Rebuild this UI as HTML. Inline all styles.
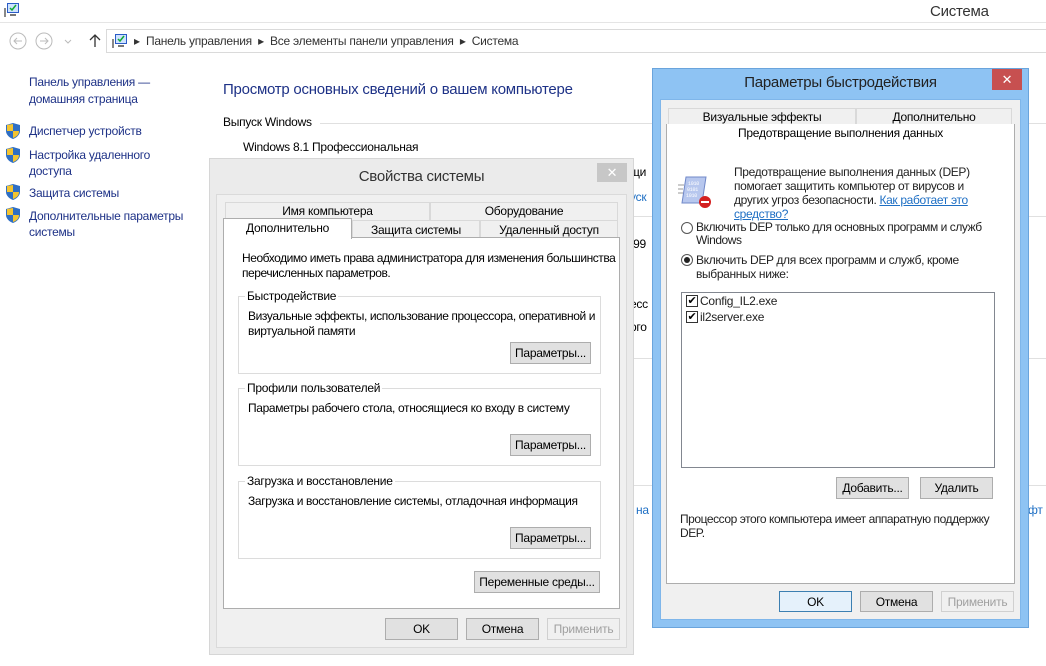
<!DOCTYPE html>
<html><head><meta charset="utf-8"><style>
*{margin:0;padding:0;box-sizing:border-box}
body{width:1046px;height:666px;overflow:hidden;background:#fff;font-family:"Liberation Sans",sans-serif;font-size:12px;color:#000;position:relative;letter-spacing:-0.25px}
.a{position:absolute;white-space:nowrap}
.btn{position:absolute;background:#e1e1e1;border:1px solid #adadad;text-align:center;font-size:12px;line-height:20px;color:#000}
.dis{color:#a0a0a0;background:#f0f0f0;border-color:#d0d0d0}
.grp{position:absolute;border:1px solid #dcdcdc}
.gl{position:absolute;background:#fff;padding:0 2px;top:-8px;left:6px;font-size:12px}
.tab{position:absolute;background:#f0f0f0;border:1px solid #d9d9d9;text-align:center;font-size:12px;line-height:16px}
</style></head><body>
<div class="a" style="left:0;top:0;width:1046px;height:23px;background:#fff;border-bottom:1px solid #e5e5e5"></div>
<svg class="a" style="left:4px;top:2px" width="16" height="16"><rect x="3" y="1" width="12" height="10" fill="#2a5cc7"/><rect x="4" y="2" width="10" height="8" fill="#cfe3ff"/><path d="M6 6l2 2 4-5" stroke="#1a3" stroke-width="1.5" fill="none"/><rect x="6" y="12" width="6" height="2" fill="#777"/><rect x="0" y="6" width="2" height="9" fill="#888"/></svg>
<div class="a" style="left:930px;top:3px;font-size:15px;color:#333">Система</div>
<svg class="a" style="left:8px;top:31px" width="100" height="20"><circle cx="10" cy="10" r="8" fill="none" stroke="#bbb"/><path d="M14 10H6M9 7l-3 3 3 3" stroke="#bbb" fill="none"/><circle cx="36" cy="10" r="8" fill="none" stroke="#bbb"/><path d="M32 10h8M37 7l3 3-3 3" stroke="#bbb" fill="none"/><path d="M57 9l3 3 3-3" stroke="#bbb" fill="none"/><path d="M87 16V4M82 9l5-5 5 5" stroke="#333" stroke-width="1.3" fill="none"/></svg>
<div class="a" style="left:106px;top:29px;width:940px;height:24px;border:1px solid #dadada;border-right:none"></div>
<svg class="a" style="left:112px;top:33px" width="16" height="16"><rect x="3" y="1" width="12" height="10" fill="#2a5cc7"/><rect x="4" y="2" width="10" height="8" fill="#cfe3ff"/><path d="M6 6l2 2 4-5" stroke="#1a3" stroke-width="1.5" fill="none"/><rect x="6" y="12" width="6" height="2" fill="#777"/><rect x="0" y="6" width="2" height="9" fill="#888"/></svg>
<div class="a" style="left:134px;top:34px;font-size:12px;color:#333">▸&nbsp; Панель управления &nbsp;▸&nbsp; Все элементы панели управления &nbsp;▸&nbsp; Система</div>
<div class="a" style="left:29px;top:74px;line-height:17px;color:#1e3287">Панель управления —<br>домашняя страница</div>
<div class="a" style="left:29px;top:123px;line-height:16px;color:#1e3287">Диспетчер устройств</div>
<div class="a" style="left:29px;top:147px;line-height:16px;color:#1e3287">Настройка удаленного<br>доступа</div>
<div class="a" style="left:29px;top:185px;line-height:16px;color:#1e3287">Защита системы</div>
<div class="a" style="left:29px;top:208px;line-height:16px;color:#1e3287">Дополнительные параметры<br>системы</div>
<svg class="a" style="left:6px;top:123px" width="16" height="110"><g id="s"><path d="M7 0L14 2V8C14 12 10 15 7 16 4 15 0 12 0 8V2Z" fill="#2f6fc4"/><path d="M7 1V8H1V2ZM7 8H13C13 12 10 14 7 15Z" fill="#f4c430"/></g><use href="#s" y="24"/><use href="#s" y="61"/><use href="#s" y="84"/></svg>
<div class="a" style="left:223px;top:81px;font-size:15px;color:#1e3287">Просмотр основных сведений о вашем компьютере</div>
<div class="a" style="left:223px;top:115px;color:#000">Выпуск Windows</div>
<div class="a" style="left:320px;top:123px;width:726px;height:1px;background:#e0e0e0"></div>
<div class="a" style="left:243px;top:140px">Windows 8.1 Профессиональная</div>
<div class="a" style="left:630px;top:165px">щи</div>
<div class="a" style="left:630px;top:190px;color:#1e6fc4">уск</div>
<div class="a" style="left:630px;top:216px;width:416px;height:1px;background:#e0e0e0"></div>
<div class="a" style="left:630px;top:237px">.99</div>
<div class="a" style="left:630px;top:297px">есс</div>
<div class="a" style="left:630px;top:320px">рго</div>
<div class="a" style="left:630px;top:358px;width:416px;height:1px;background:#e0e0e0"></div>
<div class="a" style="left:630px;top:485px;width:416px;height:1px;background:#e0e0e0"></div>
<div class="a" style="left:636px;top:503px;color:#1e6fc4">на</div>
<div class="a" style="left:1028px;top:503px;color:#1e6fc4">фт</div>

<div class="a" style="left:209px;top:158px;width:425px;height:497px;background:#ebebeb;border:1px solid #d6d6d6"></div>
<div class="a" style="left:216px;top:194px;width:411px;height:454px;background:#f0f0f0;border:1px solid #dadada"></div>
<div class="a" style="left:209px;top:168px;width:425px;text-align:center;font-size:15px;color:#333">Свойства системы</div>
<div class="a" style="left:597px;top:163px;width:30px;height:19px;background:#c7c7c7;color:#fff;text-align:center;font-size:13px;line-height:19px">✕</div>
<div class="tab" style="left:225px;top:202px;width:205px;height:19px">Имя компьютера</div>
<div class="tab" style="left:430px;top:202px;width:188px;height:19px">Оборудование</div>
<div class="tab" style="left:352px;top:220px;width:128px;height:19px;line-height:18px">Защита системы</div>
<div class="tab" style="left:480px;top:220px;width:138px;height:19px;line-height:18px">Удаленный доступ</div>
<div class="a" style="left:223px;top:237px;width:397px;height:372px;background:#fff;border:1px solid #adadad"></div>
<div class="a" style="left:223px;top:218px;width:129px;height:21px;background:#fff;border:1px solid #adadad;border-bottom:none;text-align:center;line-height:19px">Дополнительно</div>
<div class="a" style="left:242px;top:251px;line-height:15px;letter-spacing:-0.45px">Необходимо иметь права администратора для изменения большинства<br>перечисленных параметров.</div>
<div class="grp" style="left:238px;top:296px;width:363px;height:78px"><span class="gl">Быстродействие</span></div>
<div class="a" style="left:248px;top:309px;line-height:15px;letter-spacing:-0.4px">Визуальные эффекты, использование процессора, оперативной и<br>виртуальной памяти</div>
<div class="btn" style="left:510px;top:342px;width:81px;height:22px">Параметры...</div>
<div class="grp" style="left:238px;top:388px;width:363px;height:78px"><span class="gl">Профили пользователей</span></div>
<div class="a" style="left:248px;top:401px;letter-spacing:-0.35px">Параметры рабочего стола, относящиеся ко входу в систему</div>
<div class="btn" style="left:510px;top:434px;width:81px;height:22px">Параметры...</div>
<div class="grp" style="left:238px;top:481px;width:363px;height:78px"><span class="gl">Загрузка и восстановление</span></div>
<div class="a" style="left:248px;top:494px;letter-spacing:-0.35px">Загрузка и восстановление системы, отладочная информация</div>
<div class="btn" style="left:510px;top:527px;width:81px;height:22px">Параметры...</div>
<div class="btn" style="left:474px;top:571px;width:126px;height:22px">Переменные среды...</div>
<div class="btn" style="left:385px;top:618px;width:73px;height:22px">OK</div>
<div class="btn" style="left:466px;top:618px;width:73px;height:22px">Отмена</div>
<div class="btn dis" style="left:547px;top:618px;width:73px;height:22px">Применить</div>

<div class="a" style="left:652px;top:68px;width:377px;height:560px;background:#8ec3f3;border:1px solid #6aa4dc"></div>
<div class="a" style="left:660px;top:99px;width:361px;height:521px;background:#f0f0f0;border:1px solid #7fb6ea"></div>
<div class="a" style="left:652px;top:74px;width:377px;text-align:center;font-size:15px;color:#222">Параметры быстродействия</div>
<div class="a" style="left:992px;top:69px;width:30px;height:21px;background:#c75050;color:#fff;text-align:center;font-size:13px;line-height:21px">✕</div>
<div class="tab" style="left:668px;top:108px;width:188px;height:18px">Визуальные эффекты</div>
<div class="tab" style="left:856px;top:108px;width:156px;height:18px">Дополнительно</div>
<div class="a" style="left:666px;top:124px;width:349px;height:460px;background:#fff;border:1px solid #adadad;border-top:none"></div>
<div class="a" style="left:666px;top:124px;width:349px;text-align:center;line-height:18px">Предотвращение выполнения данных</div>
<svg class="a" style="left:678px;top:173px" width="36" height="36"><path d="M8 4h20l-4 26H4Z" fill="#b7c7ee" stroke="#7088c8"/><text x="10" y="12" font-size="5" fill="#fff" font-family="Liberation Mono">1010</text><text x="9" y="18" font-size="5" fill="#fff" font-family="Liberation Mono">0101</text><text x="8" y="24" font-size="5" fill="#fff" font-family="Liberation Mono">1010</text><path d="M0 12h6M0 16h5M0 20h5" stroke="#999"/><circle cx="27" cy="29" r="6" fill="#d42020"/><rect x="23" y="28" width="8" height="2" fill="#fff"/></svg>
<div class="a" style="left:734px;top:165px;line-height:14px;color:#222;letter-spacing:-0.35px">Предотвращение выполнения данных (DEP)<br>помогает защитить компьютер от вирусов и<br>других угроз безопасности. <span style="color:#1e6fc4;text-decoration:underline">Как работает это</span><br><span style="color:#1e6fc4;text-decoration:underline">средство?</span></div>
<div class="a" style="left:681px;top:222px;width:12px;height:12px;border:1px solid #555;border-radius:50%;background:#fff"></div>
<div class="a" style="left:696px;top:221px;line-height:13px;color:#222;letter-spacing:-0.45px">Включить DEP только для основных программ и служб<br>Windows</div>
<div class="a" style="left:681px;top:254px;width:12px;height:12px;border:1px solid #555;border-radius:50%;background:#fff"><div style="margin:2px;width:6px;height:6px;border-radius:50%;background:#222"></div></div>
<div class="a" style="left:696px;top:253px;line-height:14px;color:#222;letter-spacing:-0.35px">Включить DEP для всех программ и служб, кроме<br>выбранных ниже:</div>
<div class="a" style="left:681px;top:292px;width:314px;height:176px;border:1px solid #828790;background:#fff"></div>
<div class="a" style="left:686px;top:295px;width:12px;height:12px;border:1px solid #333;font-size:11px;line-height:10px;text-align:center">✔</div>
<div class="a" style="left:700px;top:294px;color:#222">Config_IL2.exe</div>
<div class="a" style="left:686px;top:311px;width:12px;height:12px;border:1px solid #333;font-size:11px;line-height:10px;text-align:center">✔</div>
<div class="a" style="left:700px;top:310px;color:#222">il2server.exe</div>
<div class="btn" style="left:836px;top:477px;width:73px;height:22px">Добавить...</div>
<div class="btn" style="left:920px;top:477px;width:73px;height:22px">Удалить</div>
<div class="a" style="left:680px;top:512px;line-height:14px;color:#222;letter-spacing:-0.45px">Процессор этого компьютера имеет аппаратную поддержку<br>DEP.</div>
<div class="btn" style="left:779px;top:591px;width:73px;height:21px;border-color:#3c7fb1;background:#e5f1fb">OK</div>
<div class="btn" style="left:860px;top:591px;width:73px;height:21px">Отмена</div>
<div class="btn dis" style="left:941px;top:591px;width:73px;height:21px">Применить</div>
</body></html>
